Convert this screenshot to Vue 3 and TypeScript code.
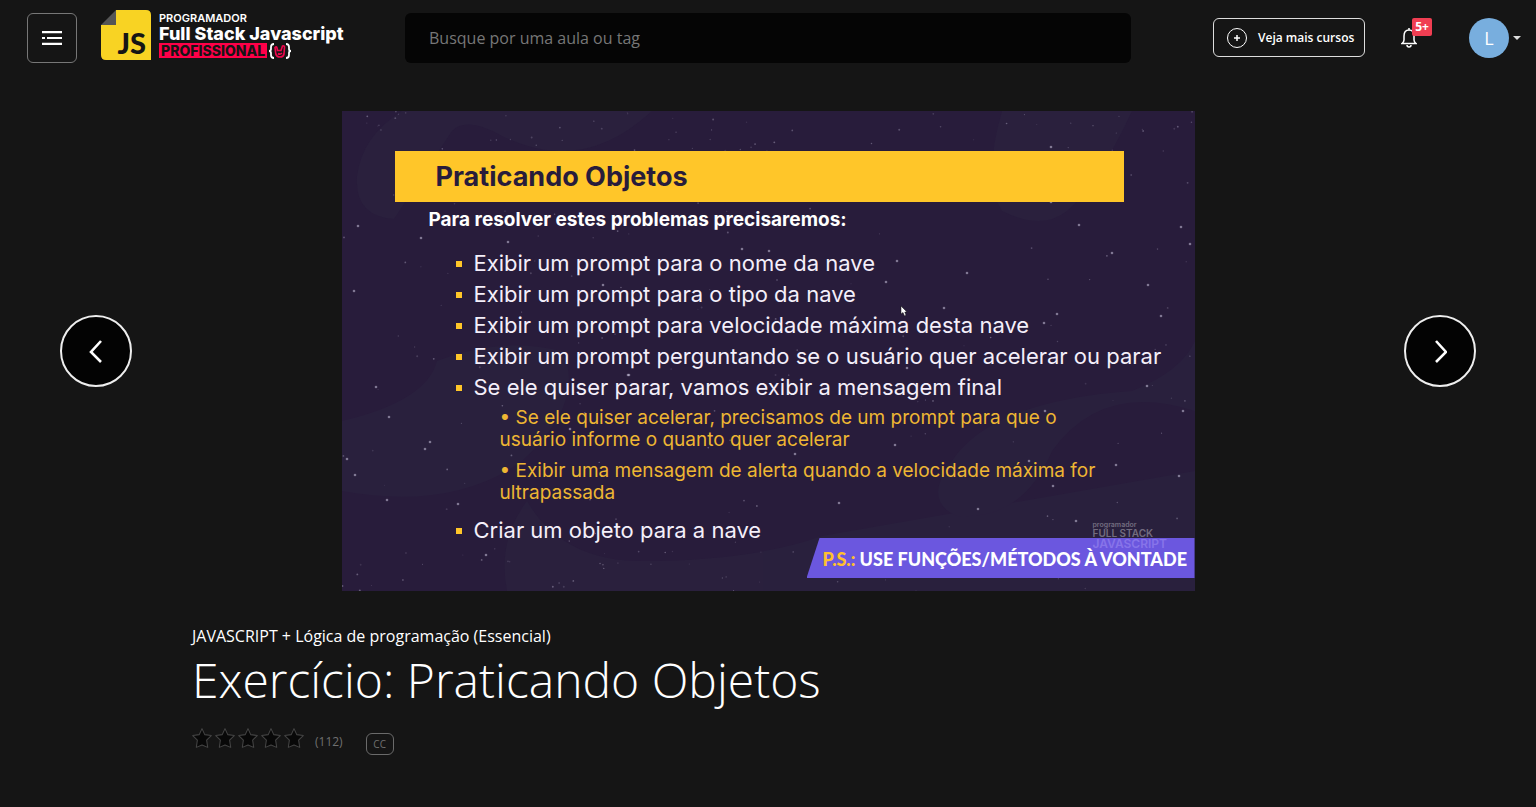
<script setup lang="ts">
interface Star { x: number; y: number; r: number; o: number }

let seed = 41
const rnd = (): number => {
  seed = (seed * 16807) % 2147483647
  return seed / 2147483647
}
const dust: Star[] = Array.from({ length: 250 }, (_, i) => {
  const edge = i % 3 === 0
  const band = rnd() < 0.5 ? rnd() * 40 : 440 + rnd() * 40
  return { x: rnd() * 853, y: edge ? band : rnd() * 480, r: 0.5 + rnd() * 0.5, o: 0.12 + rnd() * 0.3 }
})
const bright: Star[] = [
  [12, 180], [16, 115], [79, 127], [166, 131], [400, 138], [427, 140], [47, 306], [34, 276], [13, 364],
  [45, 389], [83, 338], [116, 393], [5, 348], [88, 331], [144, 444], [261, 174], [286, 264], [228, 318],
  [737, 114], [709, 91], [839, 116], [848, 133], [770, 142], [806, 174], [715, 203], [702, 212],
  [819, 205], [625, 162], [555, 150], [544, 171], [602, 197], [841, 300], [703, 300], [774, 354],
  [837, 365], [687, 350], [711, 375], [734, 410], [636, 398], [553, 334], [453, 343], [586, 358],
  [565, 257], [805, 275], [709, 36], [287, 264], [497, 392]
].map(([x, y]) => ({ x, y, r: 1.3, o: 0.55 }))
const stars: Star[] = [...dust, ...bright]

const items: string[] = [
  'Exibir um prompt para o nome da nave',
  'Exibir um prompt para o tipo da nave',
  'Exibir um prompt para velocidade máxima desta nave',
  'Exibir um prompt perguntando se o usuário quer acelerar ou parar',
  'Se ele quiser parar, vamos exibir a mensagem final'
]
const ratings: number[] = [1, 2, 3, 4, 5]
</script>

<template>
  <div class="page">
    <header class="topbar">
      <button class="menu" type="button" aria-label="Menu">
        <svg width="20" height="14" viewBox="0 0 20 14" stroke="#fff" stroke-width="2.2">
          <path d="M0 1.200h20M0 12.800h20M5 7h15M0 7h3" />
        </svg>
      </button>
      <a class="brand" href="#" aria-label="Programador Full Stack Javascript Profissional">
        <span class="mark">
          <svg class="sheet" width="50" height="50" viewBox="0 0 50 50">
            <path fill="#f8d323" d="M15 0h30q5 0 5 5v45H5q-5 0-5-5V15h15z" />
            <path fill="#555" d="M15 0v15H0z" />
          </svg>
          <span class="js">JS</span>
        </span>
        <span class="words">
          <span class="w1">PROGRAMADOR</span>
          <span class="w2">Full Stack Javascript</span>
          <span class="w3">
            <span class="pro">PROFISSIONAL</span>
            <svg width="24" height="16" viewBox="0 0 24 16" fill="none">
              <path stroke="#fff" stroke-width="1.8" d="M6 1Q3 1 3 4v2Q3 8 1 8q2 0 2 2v2q0 3 3 3M18 1q3 0 3 3v2q0 2 2 2-2 0-2 2v2q0 3-3 3" />
              <path stroke="#f0064c" stroke-width="1.6" d="M7 4.500q1.500-1.500 2 .5l.5 2.500h3.500l1.500-4.500q2-.5 2 1L16 11q-.5 3-4 3t-4.200-3zM10 10.500q2 1.500 4-.5" />
            </svg>
          </span>
        </span>
      </a>
      <input class="search" type="search" placeholder="Busque por uma aula ou tag" aria-label="Busque por uma aula ou tag">
      <div class="actions">
        <button class="more" type="button">
          <svg width="20" height="20" viewBox="0 0 20 20" fill="none" stroke="#fff">
            <circle cx="10" cy="10" r="9.500" /><path stroke-width="1.500" d="M10 7v6M7 10h6" />
          </svg>
          Veja mais cursos
        </button>
        <button class="bell" type="button" aria-label="Notificações">
          <svg width="16" height="20" viewBox="0 0 16 20" fill="none" stroke="#fff" stroke-width="1.500">
            <path d="M8 2Q3 2 3 8v4q0 2-2 3.500h14Q13 14 13 12V8q0-6-5-6zM8 0v2M6 17q0 2 2 2t2-2" />
          </svg>
          <span class="count">5+</span>
        </button>
        <button class="user" type="button" aria-label="Conta">
          <span class="avatar">L</span>
          <svg width="8" height="4" viewBox="0 0 8 4"><path fill="#ddd" d="M0 0h8L4 4z" /></svg>
        </button>
      </div>
    </header>

    <main>
      <div class="stage">
        <button class="nav" type="button" aria-label="Aula anterior">
          <svg width="14" height="24" viewBox="0 0 14 24" fill="none" stroke="#fff" stroke-width="2.600"><path d="M12 2L2 13L12 23" /></svg>
        </button>
        <section class="slide">
          <svg class="sky" viewBox="0 0 853 480" preserveAspectRatio="none">
            <g fill="#2b2440" opacity=".5">
              <path d="M60 0H310Q240 65 160 25Q125 5 110 20L52 108Q12 105 15 65Q20 25 60 0z" />
              <path d="M0 310Q85 290 95 250Q160 225 220 240Q245 290 180 350Q110 400 0 380z" />
              <path d="M165 480Q155 430 185 390Q220 450 300 450Q410 450 480 425L853 360V480H400z" />
              <path d="M660 0H790Q755 75 725 100Q700 120 660 100Q640 70 660 0z" />
              <path d="M853 230V300Q760 270 710 340Q680 410 615 405Q580 390 610 350Q650 290 790 280Q840 260 853 230z" />
            </g>
            <circle v-for="(s, i) in stars" :key="i" :cx="s.x" :cy="s.y" :r="s.r" :opacity="s.o" fill="#c9c2dc" />
          </svg>
          <h2>Praticando Objetos</h2>
          <p class="lead">Para resolver estes problemas precisaremos:</p>
          <ul class="list">
            <li v-for="item in items" :key="item">{{ item }}</li>
          </ul>
          <div class="sub">
            <p>• Se ele quiser acelerar, precisamos de um prompt para que o<br>usuário informe o quanto quer acelerar</p>
            <p>• Exibir uma mensagem de alerta quando a velocidade máxima for<br>ultrapassada</p>
          </div>
          <ul class="list last"><li>Criar um objeto para a nave</li></ul>
          <p class="ps"><b>P.S.:</b> USE FUNÇÕES/MÉTODOS À VONTADE</p>
          <div class="watermark"><span>programador</span><span class="fs">FULL STACK</span><span class="jv">JAVASCRIPT</span></div>
          <svg class="cursor" width="8" height="12" viewBox="0 0 8 12"><path fill="#fff" stroke="#111" stroke-width=".5" d="M1 1v8l2-1.500L4.500 11l1.500-.7L4.800 7H7z" /></svg>
        </section>
        <button class="nav" type="button" aria-label="Próxima aula">
          <svg width="14" height="24" viewBox="0 0 14 24" fill="none" stroke="#fff" stroke-width="2.600"><path d="M3 2L13 13L3 23" /></svg>
        </button>
      </div>
      <section class="info">
        <p class="course">JAVASCRIPT + Lógica de programação (Essencial)</p>
        <h1>Exercício: Praticando Objetos</h1>
        <div class="meta">
          <div class="stars">
            <button v-for="n in ratings" :key="n" type="button" :aria-label="'Nota ' + n">
              <svg width="20" height="20" viewBox="0 0 19 19"><path fill="#080808" stroke="#444" stroke-linejoin="round" d="M9.500.6l2.600 5.700 6.200.9-4.400 4.300 1 6.900-5.400-2.300-5.400 2.300 1-6.900L.7 7.200l6.200-.9z" /></svg>
            </button>
          </div>
          <span class="votes">(112)</span>
          <button class="cc" type="button">CC</button>
        </div>
      </section>
    </main>
  </div>
</template>

<style>
body { margin: 0; background: #151515; }
</style>

<style scoped>
* { box-sizing: border-box; }
.page { min-height: 100vh; background: #151515; color: #fff; font-family: "Open Sans", "Noto Sans", sans-serif; overflow: hidden; }
button { font: inherit; color: inherit; background: none; border: 0; padding: 0; }
svg { display: block; flex: none; }
h1, h2, p, ul { margin: 0; padding: 0; }
.topbar { display: flex; align-items: center; height: 75px; padding: 0 15px 0 27px; }
.menu { width: 50px; height: 50px; border: 1px solid #777; border-radius: 6px; display: grid; place-items: center; flex: none; }
.brand { display: flex; width: 304px; height: 50px; margin: 0 0 5px 24px; gap: 8px; color: #fff; text-decoration: none; flex: none; white-space: nowrap; }
.mark { display: grid; flex: none; }
.mark > * { grid-area: 1 / 1; }
.js { align-self: end; justify-self: end; padding-right: 5px; color: #151515; font: 900 29px/34px Lato, sans-serif; }
.words { display: flex; flex-direction: column; font-family: Inter, sans-serif; }
.w1 { font-size: 11px; line-height: 14px; font-weight: 600; padding-top: 1px; }
.w2 { font-size: 18px; line-height: 18px; font-weight: 800; }
.w3 { display: flex; gap: 1px; }
.pro { background: #ff0048; color: #151515; font-size: 14px; line-height: 15px; font-weight: 800; padding: 0 2px; height: 15px; }
.search { flex: 1; min-width: 0; height: 50px; border: 0; border-radius: 6px; background: #050505; padding: 0 24px; color: #fff; font: 16px "Open Sans", sans-serif; }
.search::placeholder { color: #777; opacity: 1; }
.actions { display: flex; align-items: center; flex: none; padding-left: 82px; }
.more { display: flex; align-items: center; gap: 11px; width: 152px; height: 39px; padding: 0 13px; border: 1px solid #ddd; border-radius: 6px; font-size: 12px; font-weight: 600; white-space: nowrap; }
.bell { position: relative; margin-left: 36px; }
.count { position: absolute; left: 11px; top: -10px; width: 20px; height: 18px; border-radius: 2px; background: #f03e52; font-size: 12px; line-height: 18px; font-weight: 700; text-align: center; }
.user { display: flex; align-items: center; gap: 4px; margin-left: 52px; }
.avatar { width: 40px; height: 40px; border-radius: 50%; background: #78aede; font-size: 18px; line-height: 40px; text-align: center; }
.stage { display: flex; justify-content: space-between; align-items: center; padding: 36px 60px 0; }
.nav { width: 72px; height: 72px; border: 2px solid #eee; border-radius: 50%; background: #030303; display: grid; place-items: center; flex: none; }
.slide { position: relative; width: 853px; height: 480px; padding-top: 40px; background: #281c3b; font-family: Inter, sans-serif; white-space: nowrap; overflow: hidden; }
.slide > * { position: relative; }
.slide > .sky { position: absolute; inset: 0; width: 100%; height: 100%; }
.slide h2 { margin: 0 71px 0 53px; padding-left: 41px; background: #ffc629; color: #281c3b; font-size: 27px; line-height: 51px; font-weight: 700; }
.lead { padding: 4px 0 0 87px; font-size: 19px; line-height: 28px; font-weight: 700; }
.list { list-style: none; padding: 14px 0 0 114px; font-size: 22px; line-height: 31px; color: #f4effa; }
.list li { display: flex; align-items: center; gap: 12px; }
.list li::before { content: ""; width: 6px; height: 6px; background: #ffc629; }
.sub { padding: 4px 0 0 158px; display: grid; gap: 9px; color: #eeb633; font-size: 19px; line-height: 22px; }
.list.last { padding-top: 11px; }
.slide > .ps { position: absolute; right: 0; bottom: 13px; width: 388px; height: 40px; padding-left: 16px; background: #6b57df; clip-path: polygon(13px 0, 100% 0, 100% 100%, 0 100%); font-family: Lato, sans-serif; font-size: 18px; line-height: 42px; font-weight: 900; }
.ps b { color: #ffc02d; font-weight: inherit; }
.slide > .watermark { position: absolute; right: 26px; bottom: 41px; width: 78px; display: flex; flex-direction: column; padding-left: 2px; color: #a39fab; opacity: .6; font-size: 7px; line-height: 8px; font-weight: 600; }
.fs { font-size: 10px; line-height: 9px; }
.jv { font-size: 12px; line-height: 12px; color: #9a88f0; }
.slide > .cursor { position: absolute; left: 558px; top: 194px; }
.info { padding: 33px 192px 0; }
.course { font-size: 16px; line-height: 24px; font-weight: 500; }
h1 { font-size: 48px; line-height: 64px; font-weight: 300; }
.meta { display: flex; align-items: center; height: 58px; color: #707070; }
.stars { display: flex; gap: 3px; padding-bottom: 6px; }
.votes { margin-left: 11px; font-size: 12px; }
.cc { width: 28px; height: 22px; margin: 6px 0 0 23px; border: 1px solid #6a6a6a; border-radius: 6px; font-size: 10px; }
</style>
